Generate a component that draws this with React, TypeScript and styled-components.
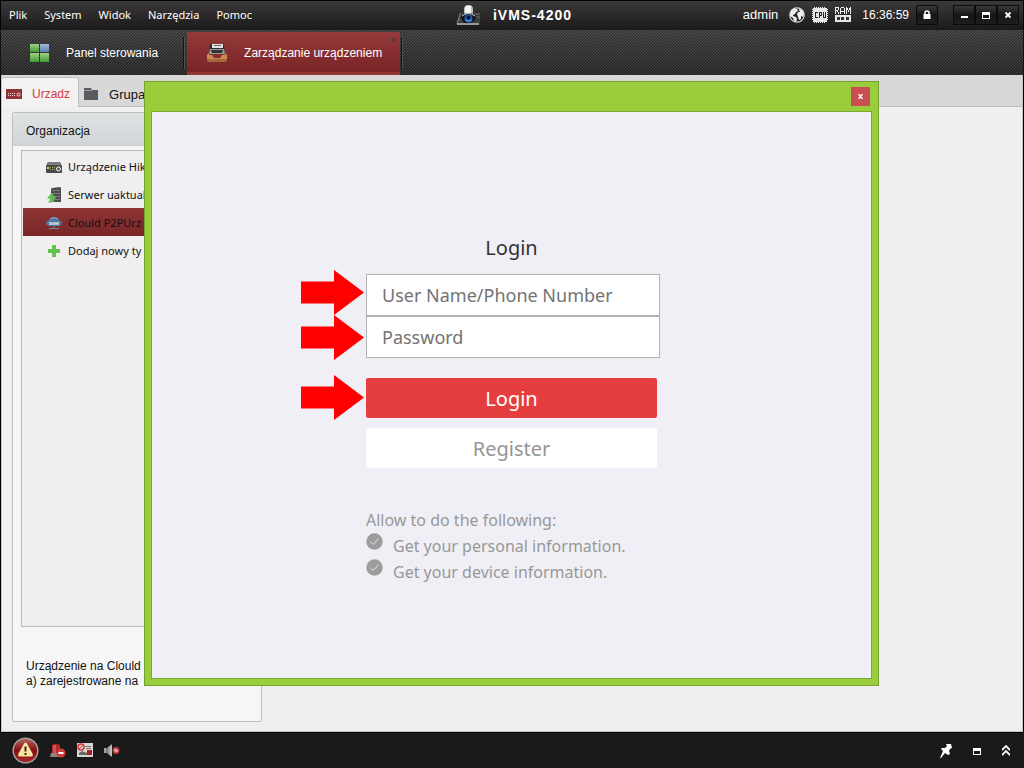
import React from "react";
import styled, { createGlobalStyle, css } from "styled-components";

const UI_FONT = `"Liberation Sans", Arial, sans-serif`;
const MENU_FONT = `"Noto Sans", "Open Sans", sans-serif`;

const GlobalStyle = createGlobalStyle`
  *, *::before, *::after { box-sizing: border-box; }
  body { margin: 0; background: #000; font-family: ${UI_FONT}; font-size: 12px; color: #111; }
  button, input { font: inherit; color: inherit; }
  button { padding: 0; border: 0; background: none; cursor: pointer; }
  svg { display: block; flex: none; }
`;

const Window = styled.div`
  min-height: 100vh;
  display: flex;
  flex-direction: column;
`;

/* ---------- title bar ---------- */

const TitleBar = styled.header`
  display: grid;
  grid-template-columns: 1fr auto 1fr;
  align-items: center;
  height: 30px;
  padding: 0 4px 2px 8px;
  border: solid #050505;
  border-width: 1px 1px 0;
  background: linear-gradient(#3b393a, #1b191a);
  color: #fff;
`;

const Menu = styled.nav`
  display: flex;
  gap: 17px;
  font: 11px/18px ${MENU_FONT};
`;

const Brand = styled.h1`
  display: flex;
  align-items: center;
  gap: 12px;
  margin: 0;
  font-size: 14px;
  line-height: 20px;
  letter-spacing: 1px;
`;

const StatusArea = styled.div`
  display: flex;
  align-items: center;
  justify-content: flex-end;
  gap: 7px;
`;

const StatusText = styled.span<{ $side: "left" | "right" }>`
  font-size: ${(p) => (p.$side === "left" ? 13 : 12)}px;
  ${(p) => (p.$side === "left" ? "margin-right: 4px;" : "margin-left: 4px;")}
`;

const barButton = css`
  display: grid;
  place-items: center;
  width: 22px;
  height: 20px;
  background: linear-gradient(#3a3a3a, #161616 50%, #1d1d1d);
  border: 1px solid #0c0c0c;
`;

const LockButton = styled.button`
  ${barButton}
  border-radius: 2px;
`;

const WindowControls = styled.div`
  display: flex;
  margin-left: 8px;
`;

const ControlButton = styled.button`
  ${barButton}
`;

/* ---------- module tabs ---------- */

const ModuleBar = styled.nav`
  display: flex;
  align-items: stretch;
  height: 45px;
  padding-top: 2px;
  border: solid #111;
  border-width: 0 1px;
  background:
    linear-gradient(135deg, rgba(0, 0, 0, 0.4) 25%, transparent 25% 50%, rgba(0, 0, 0, 0.4) 50% 75%, transparent 75%) 0 0 / 3px 3px,
    linear-gradient(#585858, #3c3c3c);
`;

const ModuleButton = styled.button<{ $active?: boolean }>`
  position: relative;
  display: flex;
  align-items: center;
  gap: ${(p) => (p.$active ? 17 : 15)}px;
  padding: ${(p) => (p.$active ? "0 18px 2px 20px" : "0 24px 2px 28px")};
  color: #fff;
  font-size: 12px;
  ${(p) =>
    p.$active &&
    css`
      background: linear-gradient(#943a3b, #7b2425 92%, #933536 93%);
    `}
`;

const CloseMark = styled.svg`
  position: absolute;
  top: 5px;
  right: 3px;
`;

const Divider = styled.span`
  width: 2px;
  margin: 5px 2px 6px 1px;
  background: linear-gradient(90deg, #141414 50%, #505050 50%);
`;

/* ---------- workspace ---------- */

const Workspace = styled.main`
  flex: 1;
  display: flex;
  flex-direction: column;
  margin: 0 1px;
  border: solid #c4c2c2;
  border-width: 0 1px 1px;
  background: #f0eeee;
`;

const TabStrip = styled.div`
  display: flex;
  align-items: flex-end;
  height: 32px;
  background: #d8d8d8;
  box-shadow: inset 0 -1px #bdbdbd;
`;

const PageTab = styled.button<{ $active?: boolean }>`
  display: flex;
  align-items: center;
  height: 30px;
  gap: ${(p) => (p.$active ? 10 : 11)}px;
  padding: ${(p) => (p.$active ? "2px 8px 0 4px" : "4px 8px 0 5px")};
  font-size: ${(p) => (p.$active ? 12 : 13)}px;
  ${(p) =>
    p.$active &&
    css`
      color: #d23c3c;
      background: #f3f1f1;
      border: solid #bdbdbd;
      border-width: 1px 1px 0 0;
      border-radius: 2px 3px 0 0;
    `}
`;

const SidePanel = styled.aside`
  flex: 1;
  display: flex;
  flex-direction: column;
  width: 250px;
  margin: 5px 0 9px 10px;
  border: 1px solid #bfbfbf;
  border-radius: 2px;
  background: #f6f6f6;
`;

const PanelTitle = styled.h2`
  margin: 0;
  height: 33px;
  padding: 2px 13px 0;
  font-size: 12px;
  font-weight: 400;
  line-height: 32px;
  background: linear-gradient(#e0e3e4, #d2d5d7);
  border-bottom: 1px solid #cfcfcf;
`;

const DeviceTypes = styled.ul`
  flex: 1;
  margin: 4px 8px 0;
  padding: 1px;
  list-style: none;
  border: 1px solid #b9b9b9;
  background: #f0eeee;
  font: 11px/18px ${MENU_FONT};
`;

const DeviceType = styled.li<{ $selected?: boolean }>`
  display: flex;
  align-items: center;
  gap: 6px;
  height: 28px;
  padding: 1px 0 0 23px;
  background: ${(p) => (p.$selected ? "linear-gradient(#8f3536, #792526)" : "none")};
`;

const Hint = styled.p`
  margin: 32px 13px;
  font-size: 12px;
  line-height: 15px;
`;

/* ---------- status bar ---------- */

const StatusBar = styled.footer`
  display: flex;
  align-items: center;
  justify-content: space-between;
  height: 36px;
  padding: 0 14px 0 12px;
  border-top: 1px solid #000;
  background: #1a1a1a;
`;

const IconRow = styled.div<{ $gap: number }>`
  display: flex;
  align-items: center;
  gap: ${(p) => p.$gap}px;
`;

/* ---------- login dialog ---------- */

const Overlay = styled.div`
  position: fixed;
  inset: 0 1px 1px 0;
  display: grid;
  place-items: center;
`;

const Dialog = styled.section`
  width: 735px;
  max-width: 100%;
  padding: 0 6px 6px;
  border: 1px solid #76a32b;
  background: #9acd3c;
`;

const DialogBar = styled.div`
  display: flex;
  align-items: center;
  justify-content: flex-end;
  height: 29px;
  padding-right: 2px;
`;

const DialogClose = styled.button`
  display: grid;
  place-items: center;
  width: 19px;
  height: 19px;
  background: #c94f50;
`;

const DialogBody = styled.div`
  display: flex;
  justify-content: center;
  padding: 121px 0 93px;
  border: 1px solid #7dab30;
  background: #f0eff5;
  font-family: ${MENU_FONT};
`;

const LoginForm = styled.form`
  position: relative;
  display: flex;
  flex-direction: column;
  width: 291px;
`;

const FormTitle = styled.h2`
  margin: 0 0 11px;
  font-size: 20px;
  font-weight: 400;
  line-height: 30px;
  text-align: center;
  color: #333;
`;

const Fields = styled.div`
  display: flex;
  flex-direction: column;
  margin-right: -3px;
`;

const Field = styled.input`
  width: 100%;
  height: 42px;
  padding: 0 15px;
  border: 1px solid #b2b2b2;
  border-radius: 0;
  background: #fff;
  font-size: 18px;
  &::placeholder {
    color: #737373;
    opacity: 1;
  }
`;

/* tutorial arrows laid over the dialog, pointing at the form controls */
const Pointers = styled.div`
  position: absolute;
  top: 37px;
  right: 100%;
  display: flex;
  flex-direction: column;
  padding-right: 2px;
  svg:last-child {
    margin-top: 15px;
  }
`;

const Actions = styled.div`
  display: flex;
  flex-direction: column;
  gap: 10px;
  margin: 20px 0 39px;
`;

const ActionButton = styled.button<{ $primary?: boolean }>`
  width: 100%;
  height: 40px;
  border-radius: 2px;
  font-size: 20px;
  color: ${(p) => (p.$primary ? "#fff" : "#959595")};
  background: ${(p) => (p.$primary ? "#e63e3f" : "#fff")};
`;

const Terms = styled.div`
  font-size: 16px;
  line-height: 26px;
  color: #989898;
`;

const TermList = styled.ul`
  margin: 0;
  padding: 0;
  list-style: none;
`;

const Term = styled.li`
  display: flex;
  align-items: flex-start;
  gap: 10px;
`;

/* ---------- icons ---------- */

const Arrow = () => (
  <svg width="63" height="45" viewBox="0 0 63 45" aria-hidden="true">
    <path d="M0 11.500H33V0L63 22.500L33 45V33.500H0Z" fill="#fe0000" />
  </svg>
);

const CameraIcon = () => (
  <svg width="25" height="22" viewBox="0 0 25 22">
    <path d="M4 9h20v9l-1 3H1v-2z" fill="#3c3c3c" />
    <path d="M4.500 9L1 19.500" stroke="#8a8a8a" />
    <path d="M1 20h22" stroke="#9a9a9a" strokeWidth="2" />
    <path d="M18 10h6M19 13h5M3 16h3" stroke="#666" />
    <path d="M8 11V5q0-4 4.500-4T17 5v6z" fill="#bdbdbd" />
    <path d="M9 10V5q0-3 3-3.500l3 .5v8z" fill="#f4f4f4" />
    <path d="M5 13q1-4 7.500-4T20 13q-1 5-7.500 6T5 13z" fill="#121212" />
    <path d="M6 12q6-5 13 0" fill="none" stroke="#ddd" />
    <circle cx="12.500" cy="14.500" r="4" fill="#1c5fb8" />
    <circle cx="12.500" cy="13.500" r="2" fill="#06142e" />
    <path d="M9.500 16q3 3 6 0" fill="none" stroke="#58a8f4" />
  </svg>
);

const GlobeIcon = () => (
  <svg width="16" height="16" viewBox="0 0 16 16">
    <circle cx="8" cy="8" r="7.200" fill="#242223" stroke="#ddd" strokeWidth="1.200" />
    <path d="M2 4l3-2 3 0 1 2-2 1-1 2-2 1 0 1 3 1 1 2-1 3-2-1-1-3-3-2z" fill="#eee" />
    <path d="M10 2l3 1 2 4-1 3-2-1 0 3-2 1-1-3-1-3 1-2 2 0-1-2z" fill="#eee" />
  </svg>
);

const CpuIcon = () => (
  <svg width="16" height="16" viewBox="0 0 16 16" shapeRendering="crispEdges">
    <path d="M2 .5h12M2 15.500h12M.5 2v12M15.500 2v12" stroke="#eee" strokeDasharray="1 1" />
    <rect x="1" y="1" width="14" height="14" fill="#e6e6e6" />
    <path d="M3 5h3v1H4v4h2v1H3zM7 5h3v4H8v2H7zM8 6v2h1V6zM11 5h1v5h1V5h1v6h-3z" fill="#222" fillRule="evenodd" />
  </svg>
);

const RamIcon = () => (
  <svg width="16" height="16" viewBox="0 0 16 16" shapeRendering="crispEdges">
    <path d="M0 0h4v1H0zM0 1h1v6H0zM3 1h1v2H3zM1 3h2v1H1zM2 4h1v1H2zM3 5h1v2H3zM6 0h3v1H6zM5 1h1v6H5zM9 1h1v6H9zM6 4h3v1H6zM11 0h1v7h-1zM15 0h1v7h-1zM12 1h1v2h-1zM14 1h1v2h-1zM13 3h1v2h-1z" fill="#eee" />
    <path d="M0 8h16v7H0z" fill="#e6e6e6" />
    <path d="M2 10h3v3H2zM6 10h3v3H6zM11 10h3v3h-3z" fill="#333" />
  </svg>
);

const LockIcon = () => (
  <svg width="8" height="10" viewBox="0 0 8 10">
    <path d="M2 5V3q0-2 2-2t2 2v2" fill="none" stroke="#fff" strokeWidth="1.500" />
    <path d="M.5 4h7v5h-7z" fill="#fff" />
  </svg>
);

const MinimizeIcon = () => (
  <svg width="8" height="8" viewBox="0 0 8 8">
    <path d="M1 5h7v2H1z" fill="#fff" />
  </svg>
);

const RestoreIcon = () => (
  <svg width="8" height="8" viewBox="0 0 8 8" shapeRendering="crispEdges">
    <path d="M0 1h8v7H0zM1 4v3h6V4z" fill="#fff" fillRule="evenodd" />
  </svg>
);

const CloseIcon = () => (
  <svg width="8" height="8" viewBox="0 0 8 8">
    <path d="M1.500 1.500l5 5M6.500 1.500l-5 5" stroke="#fff" strokeWidth="1.800" />
  </svg>
);

const DialogCloseIcon = () => (
  <svg width="5" height="5" viewBox="0 0 5 5">
    <path d="M.5 0l4 5M4.500 0l-4 5" stroke="#fff" strokeWidth="1.400" />
  </svg>
);

const PanelIcon = () => (
  <svg width="22" height="20" viewBox="0 0 22 20">
    <defs>
      <linearGradient id="tileGreen" x2="0" y2="1">
        <stop stopColor="#a2cf86" />
        <stop offset="1" stopColor="#3e9c33" />
      </linearGradient>
      <linearGradient id="tileBlue" x2="0" y2="1">
        <stop stopColor="#a3bad6" />
        <stop offset="1" stopColor="#5780b5" />
      </linearGradient>
    </defs>
    <rect x="1" y="1" width="9" height="8" fill="url(#tileGreen)" />
    <rect x="11" y="1" width="9" height="8" fill="url(#tileBlue)" />
    <rect x="1" y="10" width="9" height="9" fill="url(#tileGreen)" />
    <rect x="11" y="10" width="9" height="9" fill="url(#tileGreen)" />
  </svg>
);

const DeviceTrayIcon = () => (
  <svg width="20" height="20" viewBox="0 0 20 20">
    <path d="M3 1h14l1 10H2z" fill="#2e2e2e" />
    <path d="M5 1h11v4H5z" fill="#e4e4e4" />
    <path d="M7 2.500h7" stroke="#666" />
    <path d="M3 6h14l1 5H2z" fill="#9a9a9a" />
    <path d="M4 7h12l-1 3H5z" fill="#333" />
    <path d="M0 12l2-2v2h3l2 3h6l2-3h3v-2l2 2v5H0z" fill="#c98b4f" />
    <path d="M0 16h20v2q0 1-2 1H2q-2 0-2-1z" fill="#a8663a" />
  </svg>
);

const RecorderIcon = () => (
  <svg width="16" height="10" viewBox="0 0 16 10">
    <path d="M0 0h16v10H0z" fill="#8e3237" />
    <path d="M2 4.500h8M2 6.500h8" stroke="#f4dada" strokeDasharray="1 1" />
    <circle cx="12.500" cy="5.500" r="1.500" fill="none" stroke="#f4dada" />
  </svg>
);

const FolderIcon = () => (
  <svg width="14" height="12" viewBox="0 0 14 12">
    <path d="M0 0h7l1 2h6v10H0z" fill="#5b5a5f" />
    <path d="M0 2.500h8" stroke="#a1a0a4" />
  </svg>
);

const EncoderIcon = () => (
  <svg width="16" height="12" viewBox="0 0 16 12">
    <path d="M2 1h12l2 4v6q0 1-1 1H1q-1 0-1-1V5z" fill="#4a4a4a" />
    <path d="M2 1h12l1 3H1z" fill="#7d7d7d" />
    <path d="M1 7h2" stroke="#c6e03c" strokeWidth="2" />
    <path d="M4 6.500h6M4 8.500h6" stroke="#92aa66" strokeDasharray="1 1" />
    <circle cx="12.500" cy="8" r="2" fill="#555" stroke="#fff" />
  </svg>
);

const ServerIcon = () => (
  <svg width="16" height="16" viewBox="0 0 16 16">
    <path d="M6 1l8-1 1 1v14H5V2z" fill="#4d4d4d" />
    <path d="M6 3.500h8M6 6.500h8M6 9.500h8M6 12.500h8" stroke="#7c7c7c" />
    <path d="M5.500 6l5 5.500H8V15q-4 1-6 0 2-1 2-3.500H1z" fill="#5fbe50" />
  </svg>
);

const CloudIcon = () => (
  <svg width="16" height="14" viewBox="0 0 16 14">
    <path d="M3 10q-3-1-3-3t3-3q1-3 5-3 4 0 5 3 3 1 3 3t-3 3z" fill="#50789f" />
    <path d="M4 3q4-3 8 0" stroke="#86a8c8" fill="none" />
    <path d="M3 6h10v3H3z" fill="#a9bfd2" />
    <path d="M9 7.500h3" stroke="#d6e558" />
    <path d="M8 10v2M3 12.500h10" stroke="#668cad" />
  </svg>
);

const PlusIcon = () => (
  <svg width="16" height="14" viewBox="0 0 16 14">
    <path d="M6 1h4v4h4v4h-4v4H6V9H2V5h4z" fill="#63c153" />
  </svg>
);

const AlarmIcon = () => (
  <svg width="27" height="27" viewBox="0 0 27 27">
    <defs>
      <linearGradient id="alarmRed" x2="0" y2="1">
        <stop stopColor="#b56767" />
        <stop offset=".5" stopColor="#850d12" />
        <stop offset="1" stopColor="#a8282b" />
      </linearGradient>
    </defs>
    <circle cx="13.500" cy="13.500" r="12.300" fill="url(#alarmRed)" stroke="#aaa0a0" strokeWidth="1.500" />
    <path d="M13.500 5.500q1 0 2 2l5 9q1 3-1 3h-12q-2 0-1-3l5-9q1-2 2-2z" fill="#f7e6a0" />
    <path d="M13.500 9.500v5M13.500 16v2" stroke="#5c1712" strokeWidth="2" />
  </svg>
);

const SirenIcon = () => (
  <svg width="16" height="16" viewBox="0 0 16 16">
    <path d="M2 2q4-2 8 0v9H2z" fill="#b3272b" />
    <path d="M3 2h3v8H3z" fill="#d25355" />
    <path d="M1 10h9v4H0z" fill="#8d8484" />
    <circle cx="11" cy="10" r="4.500" fill="#cf3b3b" />
    <path d="M8.500 10h5" stroke="#fff" strokeWidth="2" />
  </svg>
);

const PictureOffIcon = () => (
  <svg width="16" height="15" viewBox="0 0 16 15">
    <path d="M0 0h16v14H0z" fill="#d6d6d6" />
    <path d="M2 12V10l3-2 5 2v2z" fill="#666" />
    <path d="M8 3.500h6M9 5.500h5" stroke="#777" />
    <circle cx="4" cy="4" r="3" fill="#ecc" stroke="#cc3a3a" strokeWidth="1.500" />
    <path d="M2 6l4-4" stroke="#cc3a3a" />
    <path d="M10 7h5v5h-5z" fill="#b11d22" />
  </svg>
);

const MuteIcon = () => (
  <svg width="16" height="14" viewBox="0 0 16 14">
    <path d="M0 4h3l5-4v13L3 9H0z" fill="#a2a2a2" />
    <path d="M3 4v5" stroke="#555" />
    <path d="M7 2v10" stroke="#ddd" />
    <circle cx="12" cy="6.500" r="2.600" fill="#edd" stroke="#c93a3a" strokeWidth="1.600" />
    <path d="M10 8.500l4-4" stroke="#c93a3a" />
  </svg>
);

const PinIcon = () => (
  <svg width="12" height="14" viewBox="0 0 12 14">
    <path d="M6 0h5l1 4-2 1-1 2 1 3-2 1-3-2-4 5-1 0 3-7-2-2 1-1h3l2-2z" fill="#fff" />
  </svg>
);

const ChevronsIcon = () => (
  <svg width="8" height="11" viewBox="0 0 8 11">
    <path d="M0 5l4-4 4 4M0 10l4-4 4 4" fill="none" stroke="#fff" strokeWidth="1.800" />
  </svg>
);

const CheckIcon = () => (
  <svg width="17" height="17" viewBox="0 0 17 17">
    <circle cx="8.500" cy="8.500" r="8.200" fill="#9c9c9c" />
    <path d="M4.500 9l3 2.500 5-6" fill="none" stroke="#e2e2e4" />
  </svg>
);

/* ---------- page ---------- */

const menuItems = ["Plik", "System", "Widok", "Narzędzia", "Pomoc"];

const deviceTypes = [
  { label: "Urządzenie Hik", icon: <EncoderIcon /> },
  { label: "Serwer uaktual", icon: <ServerIcon /> },
  { label: "Clould P2PUrz", icon: <CloudIcon />, selected: true },
  { label: "Dodaj nowy ty", icon: <PlusIcon /> },
];

const terms = ["Get your personal information.", "Get your device information."];

export default function App() {
  return (
    <>
      <GlobalStyle />
      <Window>
        <TitleBar>
          <Menu>
            {menuItems.map((item) => (
              <button key={item}>{item}</button>
            ))}
          </Menu>
          <Brand>
            <CameraIcon />
            iVMS-4200
          </Brand>
          <StatusArea>
            <StatusText $side="left">admin</StatusText>
            <GlobeIcon />
            <CpuIcon />
            <RamIcon />
            <StatusText $side="right">16:36:59</StatusText>
            <LockButton aria-label="Lock"><LockIcon /></LockButton>
            <WindowControls>
              <ControlButton aria-label="Minimize"><MinimizeIcon /></ControlButton>
              <ControlButton aria-label="Restore"><RestoreIcon /></ControlButton>
              <ControlButton aria-label="Close"><CloseIcon /></ControlButton>
            </WindowControls>
          </StatusArea>
        </TitleBar>

        <ModuleBar>
          <ModuleButton>
            <PanelIcon />
            Panel sterowania
          </ModuleButton>
          <Divider />
          <ModuleButton $active>
            <DeviceTrayIcon />
            Zarządzanie urządzeniem
            <CloseMark width="6" height="6" viewBox="0 0 6 6">
              <path d="M1 1l4 4M5 1L1 5" stroke="#5d3a3c" strokeWidth="2" />
            </CloseMark>
          </ModuleButton>
          <Divider />
        </ModuleBar>

        <Workspace>
          <TabStrip>
            <PageTab $active><RecorderIcon />Urzadz</PageTab>
            <PageTab><FolderIcon />Grupa</PageTab>
          </TabStrip>
          <SidePanel>
            <PanelTitle>Organizacja</PanelTitle>
            <DeviceTypes>
              {deviceTypes.map((d) => (
                <DeviceType key={d.label} $selected={d.selected}>
                  {d.icon}
                  {d.label}
                </DeviceType>
              ))}
            </DeviceTypes>
            <Hint>
              Urządzenie na Clould
              <br />
              a) zarejestrowane na
            </Hint>
          </SidePanel>
        </Workspace>

        <StatusBar>
          <IconRow $gap={11}>
            <button aria-label="Alarms"><AlarmIcon /></button>
            <button aria-label="Clear alarms"><SirenIcon /></button>
            <button aria-label="Disable alarm pictures"><PictureOffIcon /></button>
            <button aria-label="Mute"><MuteIcon /></button>
          </IconRow>
          <IconRow $gap={21}>
            <button aria-label="Pin"><PinIcon /></button>
            <button aria-label="Maximize"><RestoreIcon /></button>
            <button aria-label="Expand"><ChevronsIcon /></button>
          </IconRow>
        </StatusBar>
      </Window>

      <Overlay>
        <Dialog role="dialog" aria-label="Login">
          <DialogBar>
            <DialogClose aria-label="Close dialog"><DialogCloseIcon /></DialogClose>
          </DialogBar>
          <DialogBody>
            <LoginForm onSubmit={(e) => e.preventDefault()}>
              <FormTitle>Login</FormTitle>
              <Fields>
                <Field type="text" aria-label="User Name/Phone Number" placeholder="User Name/Phone Number" />
                <Field type="password" aria-label="Password" placeholder="Password" />
              </Fields>
              <Actions>
                <ActionButton type="submit" $primary>Login</ActionButton>
                <ActionButton type="button">Register</ActionButton>
              </Actions>
              <Terms>
                Allow to do the following:
                <TermList>
                  {terms.map((t) => (
                    <Term key={t}><CheckIcon />{t}</Term>
                  ))}
                </TermList>
              </Terms>
              <Pointers>
                <Arrow />
                <Arrow />
                <Arrow />
              </Pointers>
            </LoginForm>
          </DialogBody>
        </Dialog>
      </Overlay>
    </>
  );
}
